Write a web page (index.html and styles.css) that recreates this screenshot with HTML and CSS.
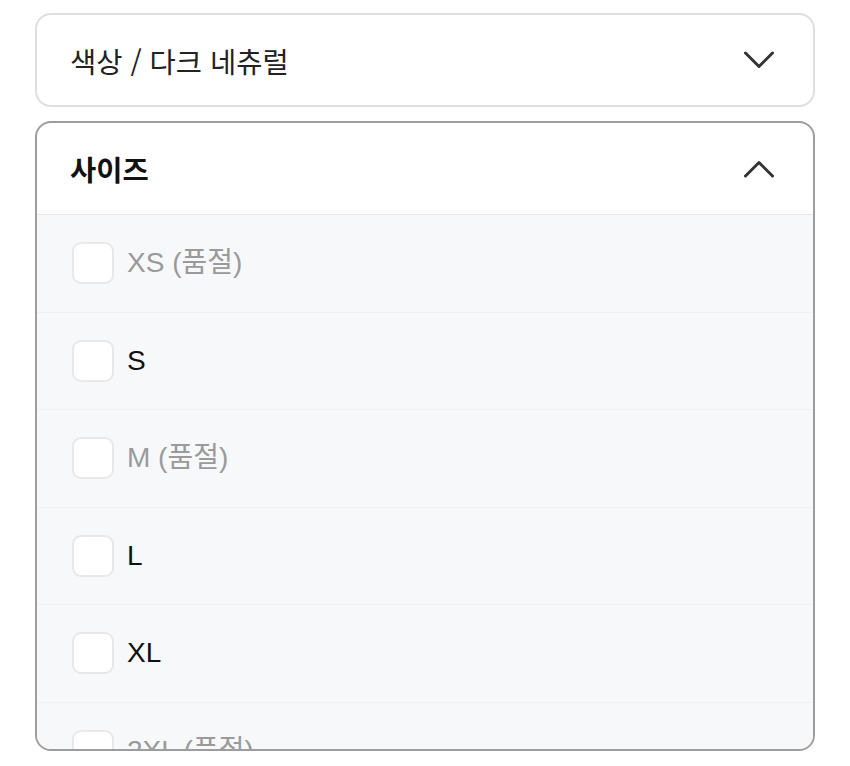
FILE: index.html
```html
<!DOCTYPE html>
<html lang="ko">
<head>
    <meta charset="UTF-8">
    <meta name="viewport" content="width=device-width, initial-scale=1.0">
    <title>옵션 선택</title>
    <link rel="stylesheet" href="styles.css">
</head>
<body>

    <div class="option-panel">

        <!-- Colour (collapsed) -->
        <div class="card">
            <div class="card-head">
                <span class="card-title">색상 / 다크 네츄럴</span>
                <svg class="chevron" viewBox="0 0 30 18" aria-hidden="true">
                    <path d="M1.5 2 L15 15.5 L28.5 2"></path>
                </svg>
            </div>
        </div>

        <!-- Size (expanded) -->
        <div class="card open">
            <div class="card-head">
                <span class="card-title">사이즈</span>
                <svg class="chevron" viewBox="0 0 30 18" aria-hidden="true">
                    <path d="M1.5 16 L15 2.5 L28.5 16"></path>
                </svg>
            </div>
            <ul class="size-list">
                <li class="size-row soldout"><label><input type="checkbox" disabled><span>XS (품절)</span></label></li>
                <li class="size-row"><label><input type="checkbox"><span>S</span></label></li>
                <li class="size-row soldout"><label><input type="checkbox" disabled><span>M (품절)</span></label></li>
                <li class="size-row"><label><input type="checkbox"><span>L</span></label></li>
                <li class="size-row"><label><input type="checkbox"><span>XL</span></label></li>
                <li class="size-row soldout"><label><input type="checkbox" disabled><span>2XL (품절)</span></label></li>
            </ul>
        </div>

    </div>

</body>
</html>
```

FILE: styles.css
```css
/* Page */
body {
    margin: 0;
    padding: 0;
    background-color: #fff;
    color: #111;
    font-family: "Liberation Sans", "Noto Sans CJK KR", sans-serif;
}

.option-panel {
    display: flex;
    flex-direction: column;
    gap: 14px;
    padding: 13px 35px 0 35px;
}

/* Accordion cards */
.card {
    border: 2px solid #dedede;
    border-radius: 16px;
    background: #fff;
    overflow: hidden;
}

.card.open {
    border-color: #9d9d9d;
    height: 630px;
    box-sizing: border-box;
}

.card-head {
    height: 90px;
    display: flex;
    align-items: center;
    justify-content: space-between;
    padding: 0 39px 0 33px;
}

.card.open .card-head {
    height: 91px;
    border-bottom: 1px solid #e6e6e6;
}

.card-title {
    font-size: 28.5px;
    color: #222;
    font-family: "Noto Sans CJK KR", sans-serif;
    font-weight: 400;
}

.card.open .card-title {
    font-weight: 700;
    color: #111;
}

.chevron {
    width: 30px;
    height: 18px;
}

.chevron path {
    fill: none;
    stroke: #333;
    stroke-width: 3;
    stroke-linecap: round;
    stroke-linejoin: round;
}

/* Size list */
.size-list {
    list-style: none;
    margin: 0;
    padding: 0;
    background: #f7f8fa;
}

.size-row {
    height: 96.5px;
    border-bottom: 1px solid #eef0f3;
}

.size-row label {
    height: 100%;
    display: flex;
    align-items: center;
    gap: 13px;
    padding-left: 35px;
    font-size: 28px;
    line-height: 1;
    color: #111;
}

.size-row.soldout label {
    color: #9a9a9a;
}

.size-row input {
    appearance: none;
    -webkit-appearance: none;
    margin: 0;
    width: 42px;
    height: 42px;
    box-sizing: border-box;
    border: 2px solid #e8e8e8;
    border-radius: 9px;
    background: #fff;
}
```
